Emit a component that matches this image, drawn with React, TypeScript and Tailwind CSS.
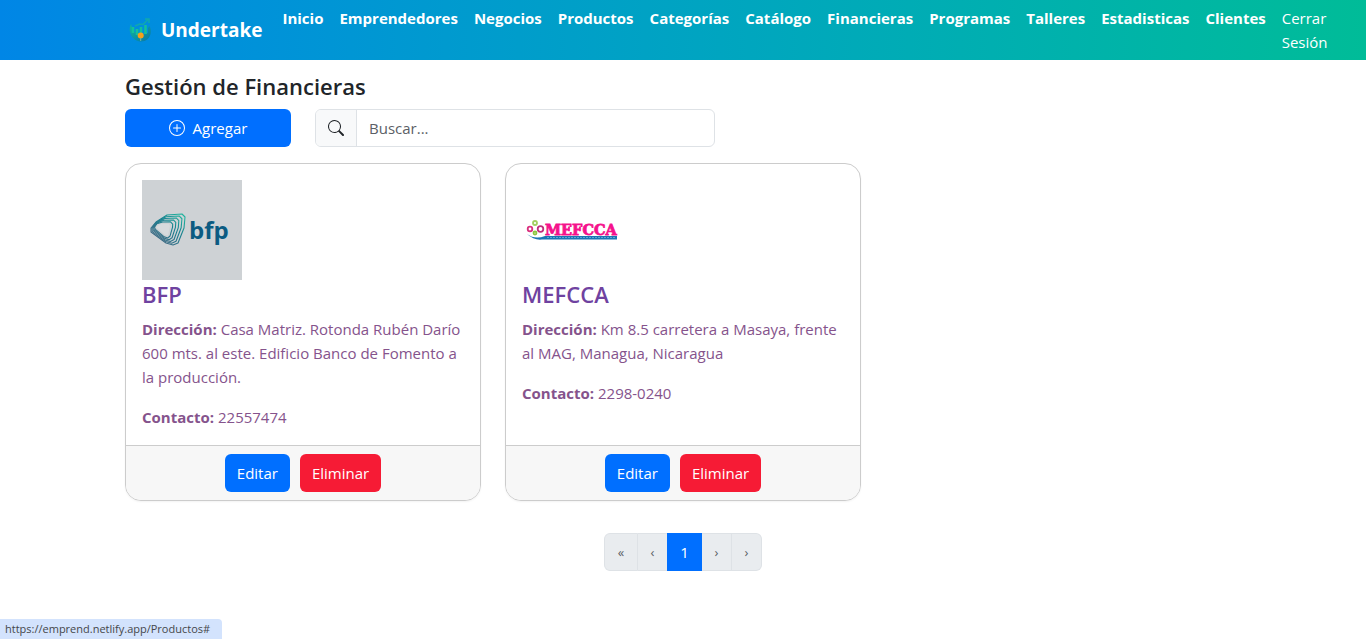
import { BsPlusCircle, BsSearch } from "react-icons/bs";

const links = [
  "Inicio",
  "Emprendedores",
  "Negocios",
  "Productos",
  "Categorías",
  "Catálogo",
  "Financieras",
  "Programas",
  "Talleres",
  "Estadisticas",
  "Clientes",
];

function BrandLogo() {
  return (
    <svg viewBox="0 0 30 30" className="h-[30px] w-[30px]" aria-hidden="true">
      <defs>
        <linearGradient id="brand" x1="0" y1="0" x2="1" y2="1">
          <stop offset="0" stopColor="#0fb89b" />
          <stop offset="0.5" stopColor="#0b96a4" />
          <stop offset="1" stopColor="#0a74a2" />
        </linearGradient>
      </defs>
      <path
        d="M6 9C4 13 4.500 17 6 20C8 24 12 26.500 16 26.500C21 26.500 25 23 25.700 18C26 15 25.500 13 24.500 11L23 13V18L18 19L12 18L8 16Z"
        fill="url(#brand)"
      />
      <path d="M8 12v6M12 14v6M16 12v6M20.500 10v9" stroke="#12c09c" strokeWidth="2.600" />
      <path d="M10 11L14.500 9L18 9.500L23 4.500M20 4H24V8" stroke="#0fa8ae" strokeWidth="1.600" fill="none" />
      <circle cx="15.700" cy="20.500" r="3" fill="#f5a01b" />
      <path d="M15.700 23v3" stroke="#6fb3a0" strokeWidth="1" />
    </svg>
  );
}

const ribbonOuter = [9, 48, 14, 42, 25, 35, 40, 34, 43, 37, 42, 48, 36, 63, 31, 65, 24, 63, 9, 52];
const ribbonInner = [13, 47, 15, 44, 20, 43, 27, 43, 29, 45, 29, 47, 27, 55, 25, 57, 22, 56, 14, 49];
const ribbonSteps = [0, 0.22, 0.44, 0.66, 0.88];

function BfpLogo() {
  return (
    <svg viewBox="0 0 100 100" className="h-[100px] w-[100px] bg-[#ced2d5]" role="img" aria-label="BFP">
      <defs>
        <linearGradient id="ribbon" gradientUnits="userSpaceOnUse" x1="40" y1="36" x2="20" y2="62">
          <stop offset="0" stopColor="#20b39e" />
          <stop offset="0.45" stopColor="#17808f" />
          <stop offset="1" stopColor="#3f6b85" />
        </linearGradient>
      </defs>
      <g fill="none" stroke="url(#ribbon)" strokeWidth="1.100" strokeLinejoin="round">
        {ribbonSteps.map((t) => (
          <polygon key={t} points={ribbonOuter.map((v, i) => v + (ribbonInner[i] - v) * t).join(" ")} />
        ))}
      </g>
      <polygon points="14,47 19,44 27,44 28,46 26,55 23,55" fill="#d6dadd" />
      <text x="47" y="59" fontFamily="'Open Sans', sans-serif" fontWeight="700" fontSize="24" fill="#0b5b82">
        bfp
      </text>
    </svg>
  );
}

function MefccaLogo() {
  return (
    <svg viewBox="0 0 100 100" className="h-[100px] w-[100px]" role="img" aria-label="MEFCCA">
      <g fill="none" strokeWidth="1.800">
        <circle cx="13" cy="43" r="2" stroke="#a3cf62" />
        <circle cx="8" cy="49" r="2.300" stroke="#d9317f" />
        <circle cx="18.500" cy="49" r="2.800" stroke="#c02c7c" />
        <circle cx="13" cy="53" r="1.500" stroke="#8cc63f" />
      </g>
      <path d="M5 54Q13 60 23 56H95V59.500H20Q12 60.500 5 54Z" fill="#1b75b5" />
      <path d="M25 57.500H93" stroke="#6fb0da" strokeWidth="0.800" strokeDasharray="2 1" />
      <text x="23" y="55" fontFamily="'DejaVu Serif', serif" fontWeight="700" fontSize="14.500" fill="#f5128c" stroke="#f5128c" strokeWidth="0.800">
        MEFCCA
      </text>
    </svg>
  );
}

type Lender = { name: string; address: string; phone: string; Logo: () => React.JSX.Element };

const lenders: Lender[] = [
  {
    name: "BFP",
    address: "Casa Matriz. Rotonda Rubén Darío 600 mts. al este. Edificio Banco de Fomento a la producción.",
    phone: "22557474",
    Logo: BfpLogo,
  },
  {
    name: "MEFCCA",
    address: "Km 8.5 carretera a Masaya, frente al MAG, Managua, Nicaragua",
    phone: "2298-0240",
    Logo: MefccaLogo,
  },
];

function LenderCard({ name, address, phone, Logo }: Lender) {
  return (
    <article className="flex flex-col overflow-hidden rounded-2xl border border-[#cccccc] bg-white shadow-xs">
      <div className="flex-1 p-4 text-[#85538c]">
        <Logo />
        <h2 className="mb-2 text-[22px] leading-[29px] font-semibold text-[#6f42a0]">{name}</h2>
        <p className="mb-4">
          <strong>Dirección:</strong> {address}
        </p>
        <p>
          <strong>Contacto:</strong> {phone}
        </p>
      </div>
      <div className="flex justify-center gap-[10px] border-t border-[#cccccc] bg-[#f7f7f7] py-2 text-white">
        <button type="button" className="h-[38px] rounded-md bg-[#006fff] px-3">
          Editar
        </button>
        <button type="button" className="h-[38px] rounded-md bg-[#f61b35] px-3">
          Eliminar
        </button>
      </div>
    </article>
  );
}

export default function App() {
  return (
    <div className="flex min-h-screen flex-col bg-white font-['Open_Sans','Noto_Sans',sans-serif] text-[15px] leading-6 text-[#212529]">
      <header className="bg-linear-to-r from-[#0086e6] to-[#00bc98] text-white">
        <nav className="mx-auto flex h-[60px] w-full max-w-[1140px] items-center px-3">
          <a href="#" className="mr-3 flex items-center gap-[6px] text-[19px] font-bold">
            <BrandLogo />
            Undertake
          </a>
          <ul className="flex font-bold">
            {links.map((label) => (
              <li key={label}>
                <a href="#" className="px-2">
                  {label}
                </a>
              </li>
            ))}
            <li className="font-normal">
              <a href="#" className="block px-2">
                Cerrar Sesión
              </a>
            </li>
          </ul>
        </nav>
      </header>
      <main className="mx-auto w-full max-w-[1140px] px-3 pt-3">
        <h1 className="mb-2 text-[22px] leading-[29px] font-semibold">Gestión de Financieras</h1>
        <div className="mb-4 grid grid-cols-6 gap-6">
          <button type="button" className="flex h-[38px] items-center justify-center gap-2 rounded-md bg-[#006fff] text-white">
            <BsPlusCircle className="h-4 w-4" />
            Agregar
          </button>
          <div className="col-span-3 flex h-[38px] max-w-[400px] overflow-hidden rounded-md border border-[#dee2e6]">
            <label htmlFor="search" className="flex items-center border-r border-[#dee2e6] bg-[#f8f9fa] px-3">
              <BsSearch className="h-4 w-4" aria-label="Buscar" />
            </label>
            <input id="search" type="text" placeholder="Buscar..." className="min-w-0 flex-1 px-3 placeholder:text-[#5b6066]" />
          </div>
        </div>
        <section className="grid grid-cols-3 gap-6">
          {lenders.map((lender) => (
            <LenderCard key={lender.name} {...lender} />
          ))}
        </section>
        <nav aria-label="Paginación" className="mt-8 flex justify-center">
          <div className="flex h-[38px] overflow-hidden rounded-md bg-[#e9ecef] text-[13px] text-[#5b6066]">
            <button type="button" className="w-[34px] rounded-l-md border border-[#dee2e6]">«</button>
            <button type="button" className="w-[29px] border-y border-[#dee2e6]">‹</button>
            <button type="button" aria-current="page" className="w-[35px] bg-[#006fff] text-[15px] text-white">1</button>
            <button type="button" className="w-[30px] border-y border-r border-[#dee2e6]">›</button>
            <button type="button" className="w-[30px] rounded-r-md border-y border-r border-[#dee2e6]">›</button>
          </div>
        </nav>
      </main>
      <footer className="mt-auto flex">
        <span className="rounded-tr-sm bg-[#d3e3fd] pr-3 pl-[5px] text-[11px] leading-[20px] text-[#45474a]">
          https://emprend.netlify.app/Productos#
        </span>
      </footer>
    </div>
  );
}
